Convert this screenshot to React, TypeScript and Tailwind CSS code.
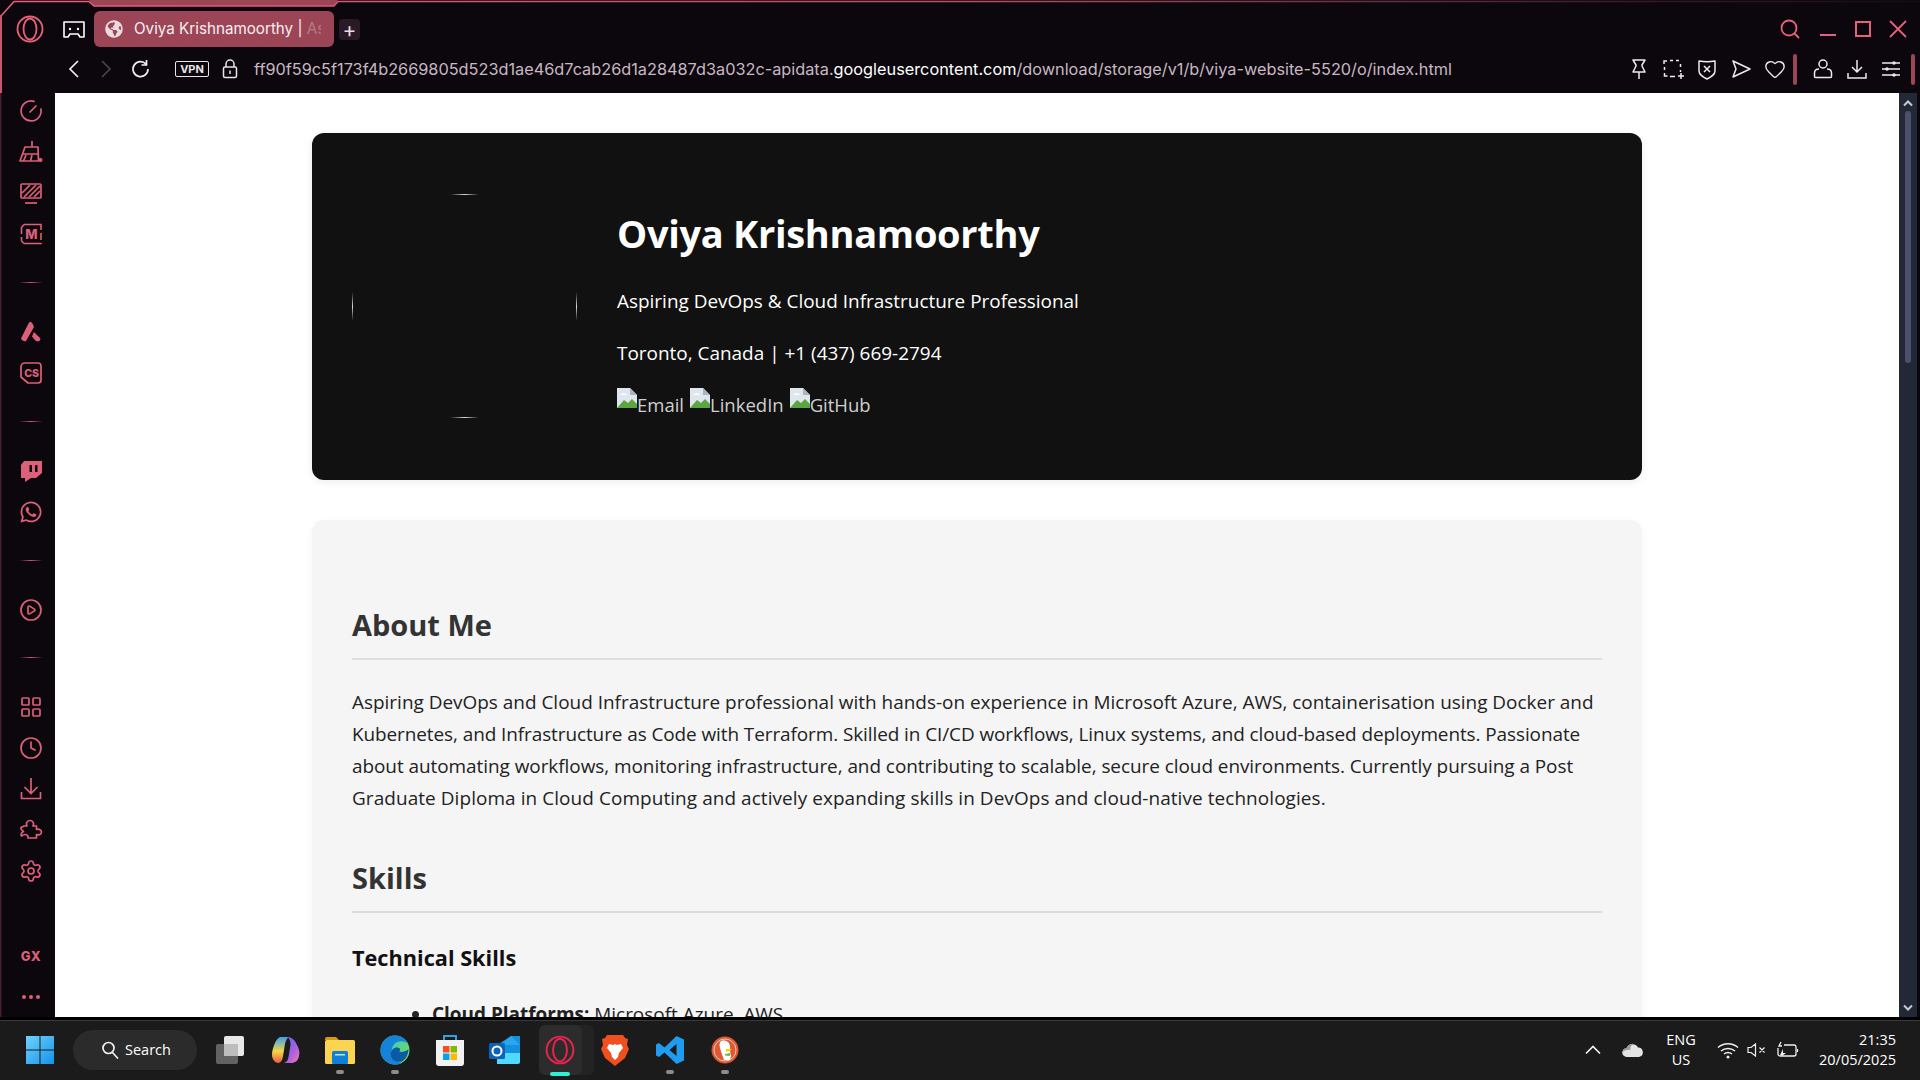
import { CirclePlay, Clock, Heart, LayoutGrid, Settings } from "lucide-react";
import { FaGlobeAmericas, FaWhatsapp } from "react-icons/fa";

const URL_HEAD = "ff90f59c5f173f4b2669805d523d1ae46d7cab26d1a28487d3a032c-apidata.";
const URL_HOST = "googleusercontent.com";
const URL_TAIL = "/download/storage/v1/b/viya-website-5520/o/index.html";

// sidebar icons, all share the same pink
function Gauge() {
    return (
        <svg width="24" height="24" viewBox="0 0 24 24" fill="none" stroke="currentColor" strokeWidth="1.7" strokeLinecap="round">
            <path d="M15 2.400A10 10 0 1 0 21.900 10" />
            <path d="M11 13l6-6" />
        </svg>
    );
}

function Cleaner() {
    return (
        <svg width="24" height="24" viewBox="0 0 24 24" fill="none" stroke="currentColor" strokeWidth="1.7" strokeLinejoin="round">
            <path d="M13 1v6M6 7h13l.5 14H1z" />
            <path d="M4 14h15.500M7 15l-2.500 6M13 15l-1.500 6" />
            <circle cx="21.500" cy="20" r="2" fill="currentColor" stroke="none" />
        </svg>
    );
}

function Hatch() {
    return (
        <svg width="24" height="24" viewBox="0 0 24 24" fill="none" stroke="currentColor" strokeWidth="1.7">
            <rect x="2" y="3" width="20" height="14" rx="1" />
            <path d="M3 12l8-8M5 16L17 4M10 16L21 5M15 16l6-6" />
            <path d="M6 22h12" />
        </svg>
    );
}

function Chip() {
    return (
        <svg width="24" height="24" viewBox="0 0 24 24" fill="none" stroke="currentColor" strokeWidth="1.6">
            <path d="M5 2.500h17V8M22 11v7M22 21v.5H5M2.500 19V15M2.500 12V5.500L5 2.500M2.500 19L5 21.500" />
            <text x="12.500" y="17" textAnchor="middle" fontFamily="Inter, sans-serif" fontWeight="800" fontSize="13" fill="currentColor" stroke="none">M</text>
        </svg>
    );
}

function Aria() {
    return (
        <svg width="24" height="24" viewBox="0 0 24 24" fill="currentColor">
            <path d="M10 2.500c1-1 3-.5 3.500 1L15 7l-8 14c-1.500.8-4 0-5-2.500z" />
            <path d="M15 12l6 6c1 1.500 0 3-1.500 3.300-1.500.2-3-.3-4-1.800l-2.500-3z" />
        </svg>
    );
}

function CsBadge() {
    return (
        <svg width="24" height="24" viewBox="0 0 24 24" fill="none" stroke="currentColor" strokeWidth="1.7" strokeLinejoin="round">
            <path d="M6 2h13a3 3 0 0 1 3 3v14a3 3 0 0 1-3 3H9l-7-6V6a4 4 0 0 1 4-4z" />
            <text x="12.500" y="15.500" textAnchor="middle" fontFamily="Inter, sans-serif" fontWeight="800" fontSize="10.500" fill="currentColor" stroke="none">CS</text>
        </svg>
    );
}

function Twitch() {
    return (
        <svg width="24" height="24" viewBox="0 0 24 24">
            <path fill="currentColor" d="M5 2h18v12l-6 5h-5l-6 4v-4H2V6z" />
            <path fill="#0b070c" d="M10.500 6h2.500v7h-2.500zM16 6h2.500v7H16z" />
        </svg>
    );
}

function TrayDown() {
    return (
        <svg width="24" height="24" viewBox="0 0 24 24" fill="none" stroke="currentColor" strokeWidth="1.7">
            <path d="M12 1v15M5.500 10l6.500 6.500 6.500-6.500M2.500 15v6.500h19V15" />
        </svg>
    );
}

function PuzzlePiece() {
    return (
        <svg width="24" height="24" viewBox="0 0 24 24" fill="none" stroke="currentColor" strokeWidth="1.7" strokeLinejoin="round">
            <path d="M5 8h3c-1.500-3 .5-5.500 3-5.500s4.500 2.500 3 5.500h3.500v3.500c2.500-1 5 .5 5 2.500s-2.500 3.500-5 2.500V20H9c.5-2-1-3.500-3-3.500-1.500 0-2.500.7-3.500 1.500-1-2 0-3.500 2-4.500-1.500-1-3-2.500-2.500-4z" />
        </svg>
    );
}

function SideDivider({ className }: { className?: string }) {
    return (
        <div className={`flex items-center justify-center ${className ?? "h-[57px]"}`}>
            <div className="w-6 h-px -mt-[2px] bg-gradient-to-r from-transparent via-[#c9566f] to-transparent" />
        </div>
    );
}

function SideIcon({ children }: { children: React.ReactNode }) {
    return <div className="h-[41px] flex items-center justify-center">{children}</div>;
}

function Sidebar() {
    return (
        <aside className="w-[55px] shrink-0 pl-[7px] flex flex-col text-[#dd5f79] bg-gradient-to-r from-[#5c2a38] from-0% to-[#0b070c] to-[4%]">
            <div className="-mt-[2.500px]">
                <SideIcon><Gauge /></SideIcon>
                <SideIcon><Cleaner /></SideIcon>
                <SideIcon><Hatch /></SideIcon>
                <SideIcon><Chip /></SideIcon>
            </div>
            <SideDivider />
            <SideIcon><Aria /></SideIcon>
            <SideIcon><CsBadge /></SideIcon>
            <SideDivider />
            <SideIcon><Twitch /></SideIcon>
            <SideIcon><FaWhatsapp size={24} /></SideIcon>
            <SideDivider />
            <SideIcon><CirclePlay size={24} strokeWidth={1.7} /></SideIcon>
            <SideDivider className="h-[56px]" />
            <SideIcon><LayoutGrid size={24} strokeWidth={1.7} /></SideIcon>
            <SideIcon><Clock size={24} strokeWidth={1.7} /></SideIcon>
            <SideIcon><TrayDown /></SideIcon>
            <SideIcon><PuzzlePiece /></SideIcon>
            <SideIcon><Settings size={24} strokeWidth={1.7} /></SideIcon>
            <div className="mt-auto h-[41px] flex items-center justify-center font-['Inter'] font-extrabold text-[13px] tracking-[0.5px]">GX</div>
            <div className="h-[38px] mb-[1.500px] flex items-center justify-center gap-[3px]">
                <span className="w-1 h-1 rounded-full bg-[#dd5f79]" />
                <span className="w-1 h-1 rounded-full bg-[#dd5f79]" />
                <span className="w-1 h-1 rounded-full bg-[#dd5f79]" />
            </div>
        </aside>
    );
}

function OperaLogo({ size, color }: { size: number; color: string }) {
    return (
        <svg width={size} height={size} viewBox="0 0 28 28" fill="none" stroke={color} strokeWidth="1.800">
            <circle cx="14" cy="14" r="12.500" />
            <ellipse cx="14" cy="14" rx="6.500" ry="10.500" />
        </svg>
    );
}

function TopBar() {
    return (
        <header className="relative h-[93px] shrink-0 bg-[#0b070c] text-white">
            {/* pink frame line that runs over the top edge */}
            <svg className="absolute left-0 top-0 w-full h-[20px]" viewBox="0 0 1920 20" preserveAspectRatio="none" fill="none">
                <defs>
                    <linearGradient id="frame" x1="0" x2="1" y1="0" y2="0">
                        <stop offset="0" stopColor="#e8607c" />
                        <stop offset="0.5" stopColor="#b85068" />
                        <stop offset="0.85" stopColor="#3a1a26" />
                        <stop offset="1" stopColor="#150c12" />
                    </linearGradient>
                </defs>
                <path d="M89 0h249l-4 6H94z" fill="#9c4557" />
                <path d="M1 16L14 1.500H89l5 4.500h240l4-4.500H1920" stroke="url(#frame)" strokeWidth="1.500" />
            </svg>
            <div className="absolute left-0 top-[15px] bottom-0 w-[2px] bg-[#c9566f]" />

            <div className="h-[52px] flex items-center pt-[6px]">
                <div className="w-[60px] flex justify-center"><OperaLogo size={28} color="#e8607c" /></div>
                <div className="w-[34px] -ml-[3px] flex justify-center">
                    <svg width="22" height="22" viewBox="0 0 22 22" fill="none" stroke="white" strokeWidth="1.600" strokeLinejoin="round">
                        <path d="M1 4h20v15h-4l-2-3H7l-2 3H1z" />
                        <circle cx="7" cy="11" r="1.200" fill="white" stroke="none" />
                        <circle cx="15" cy="11" r="1.200" fill="white" stroke="none" />
                    </svg>
                </div>
                <div className="w-[240px] h-[36px] ml-[3px] rounded-md bg-[#9c4557] flex items-center pl-[11px] overflow-hidden">
                    <FaGlobeAmericas size={18} className="text-[#e9dcdf] shrink-0" />
                    <span className="ml-[11px] font-['Inter'] text-[15.200px] whitespace-nowrap text-[#f6eef0] w-[187px] overflow-hidden">
                        Oviya Krishnamoorthy | <span className="opacity-30">As</span>
                    </span>
                </div>
                <div className="w-[21px] h-[21px] ml-[5px] rounded bg-[#2a1a26] flex items-center justify-center text-[#e4dfe3] text-[21px] leading-none font-['Inter']">+</div>

                <div className="ml-auto flex items-center text-[#e8607c] pr-[13px]">
                    <svg width="22" height="22" viewBox="0 0 22 22" fill="none" stroke="currentColor" strokeWidth="1.800" strokeLinecap="round">
                        <circle cx="10" cy="10" r="7.500" /><path d="M16 16l3.500 3.500" />
                    </svg>
                    <div className="w-4 h-[2px] bg-current ml-[19px] mt-[11px]" />
                    <div className="w-4 h-4 ml-[19px] border-2 border-current" />
                    <svg className="ml-[18px]" width="18" height="18" viewBox="0 0 18 18" stroke="currentColor" strokeWidth="1.800"><path d="M1 1l16 16M17 1L1 17" /></svg>
                </div>
            </div>

            <div className="h-[34px] flex items-center">
                <svg className="ml-[66px]" width="16" height="20" viewBox="0 0 16 20" fill="none" stroke="#f2eef1" strokeWidth="1.700"><path d="M12 2L4 10l8 8" /></svg>
                <svg className="ml-[16px]" width="16" height="20" viewBox="0 0 16 20" fill="none" stroke="#4a4549" strokeWidth="1.700"><path d="M4 2l8 8-8 8" /></svg>
                <svg className="ml-[16px]" width="20" height="20" viewBox="0 0 20 20" fill="none" stroke="#f2eef1" strokeWidth="1.700"><path d="M16 5a7.500 7.500 0 1 0 2 5M16.500 1v5h-5" /></svg>
                <span className="ml-[25px] h-[16px] w-[34px] rounded-[2px] border border-[#e8e4e7] flex items-center justify-center font-['Inter'] font-bold text-[11px] leading-none text-[#e8e4e7]">VPN</span>
                <svg className="ml-[13px]" width="16" height="20" viewBox="0 0 16 20" fill="none" stroke="#e8e4e7" strokeWidth="1.500">
                    <rect x="1.500" y="8" width="13" height="10.500" rx="1.500" />
                    <path d="M4 8V5a4 4 0 0 1 8 0v3M8 11.500v3.500" />
                </svg>
                <span className="ml-[16px] font-['Inter'] text-[16.300px] whitespace-nowrap text-[#c9b7c4]">
                    {URL_HEAD}<span className="text-white">{URL_HOST}</span>{URL_TAIL}
                </span>
                <div className="ml-auto flex items-center text-[#eeeaed]">
                    <svg width="22" height="22" viewBox="0 0 22 22" fill="none" stroke="currentColor" strokeWidth="1.500" strokeLinejoin="round">
                        <path d="M5 2h12l-3 5v1l3 6H5l3-6V7zM11 14v7" />
                    </svg>
                    <svg className="ml-[12px]" width="22" height="22" viewBox="0 0 22 22" fill="none" stroke="currentColor" strokeWidth="1.500">
                        <path d="M2 6V3h3M8 2.500h3M14 2.500h3M18.500 6v3M18.500 12v2M2.500 9v3M2.500 15v3h3M8 18.500h5M16 18h6M19 15v6" />
                    </svg>
                    <svg className="ml-[12px]" width="22" height="22" viewBox="0 0 22 22" fill="none" stroke="currentColor" strokeWidth="1.500" strokeLinejoin="round">
                        <path d="M3 3c5 1 11 1 16 0v10c0 4-4 6-8 8-4-2-8-4-8-8z" />
                        <path d="M8 8l6 6M14 8l-6 6" />
                    </svg>
                    <svg className="ml-[12px]" width="22" height="22" viewBox="0 0 22 22" fill="none" stroke="currentColor" strokeWidth="1.500" strokeLinejoin="round">
                        <path d="M3 3l17 8-17 8 3-8z" />
                    </svg>
                    <Heart className="ml-[12px]" size={22} strokeWidth={1.500} />
                    <div className="w-1 h-[31px] rounded-full bg-[#9c4557] ml-[7px]" />
                    <svg className="ml-[15px]" width="22" height="22" viewBox="0 0 22 22" fill="none" stroke="currentColor" strokeWidth="1.500">
                        <circle cx="11" cy="6" r="4" />
                        <path d="M7 11c-3 0-4.500 2-4.500 4v3.500c0 .6.500 1 1 1h15c.5 0 1-.4 1-1V15c0-2-1.500-4-4.500-4" />
                    </svg>
                    <svg className="ml-[12px]" width="22" height="22" viewBox="0 0 22 22" fill="none" stroke="currentColor" strokeWidth="1.500">
                        <path d="M11 2v12M6 9l5 5 5-5M2 15v5h18v-5" />
                    </svg>
                    <svg className="ml-[12px]" width="22" height="22" viewBox="0 0 22 22" fill="none" stroke="currentColor" strokeWidth="1.500">
                        <path d="M2 5h18M2 11h18M2 17h18" />
                        <circle cx="14" cy="5" r="1" fill="currentColor" />
                        <circle cx="7" cy="11" r="1" fill="currentColor" />
                        <circle cx="14" cy="17" r="1" fill="currentColor" />
                    </svg>
                    <div className="w-1 h-[31px] rounded-full bg-[#9c4557] ml-[9px] mr-[5px]" />
                </div>
            </div>
            <div className="h-[7px]" />
        </header>
    );
}

function BrokenImage({ alt }: { alt: string }) {
    return (
        <span className="inline-flex items-start">
            <svg width="20" height="20" viewBox="0 0 20 20" className="shrink-0">
                <path d="M0 0h13l7 7v13H0z" fill="#dfe6ee" />
                <path d="M13 0v7h7z" fill="#a9b4bf" />
                <path d="M3 7c2-2.500 5-2.500 7 0H3z" fill="#fff" />
                <path d="M0 20l7-8 4 3 4-4 5 5v4z" fill="#5ca53f" />
            </svg>
            <span className="text-[#cfcfcf] mt-[1px] leading-[32px] text-[18.500px]">{alt}</span>
        </span>
    );
}

function Profile() {
    return (
        <section className="h-[347px] rounded-xl bg-[#111111] px-10 flex gap-10 text-white shadow-[0_2px_8px_rgba(0,0,0,0.08)]">
            <div className="relative w-[225px] h-[224px] mt-[61px] shrink-0">
                <div className="absolute top-0 left-[98px] w-[29px] h-px bg-gradient-to-r from-transparent via-[#d8d8d8] to-transparent" />
                <div className="absolute bottom-0 left-[98px] w-[29px] h-px bg-gradient-to-r from-transparent via-[#d8d8d8] to-transparent" />
                <div className="absolute left-0 top-[98px] w-px h-[29px] bg-gradient-to-b from-transparent via-[#d8d8d8] to-transparent" />
                <div className="absolute right-0 top-[98px] w-px h-[29px] bg-gradient-to-b from-transparent via-[#d8d8d8] to-transparent" />
            </div>
            <div className="mt-[76px]">
                <h1 className="text-[38px] leading-[48px] font-bold tracking-[-0.3px]">Oviya Krishnamoorthy</h1>
                <p className="mt-[28px]">Aspiring DevOps &amp; Cloud Infrastructure Professional</p>
                <p className="mt-5">Toronto, Canada | +1 (437) 669-2794</p>
                <div className="mt-[19px] flex gap-[6px]">
                    <BrokenImage alt="Email" />
                    <BrokenImage alt="LinkedIn" />
                    <BrokenImage alt="GitHub" />
                </div>
            </div>
        </section>
    );
}

function SectionTitle({ children, className }: { children: React.ReactNode; className?: string }) {
    return (
        <h2 className={`text-[29px] leading-[40px] font-bold text-[#333333] pb-[13px] border-b-2 border-[#dddddd] ${className ?? ""}`}>
            {children}
        </h2>
    );
}

function Resume() {
    return (
        <section className="mt-10 h-[700px] rounded-xl bg-[#f5f5f5] px-10 pt-[85px] text-[#222222] shadow-[0_2px_8px_rgba(0,0,0,0.04)]">
            <SectionTitle>About Me</SectionTitle>
            <p className="mt-[26px] whitespace-nowrap">
                <span className="block">Aspiring DevOps and Cloud Infrastructure professional with hands-on experience in Microsoft Azure, AWS, containerisation using Docker and</span>
                <span className="block tracking-[-0.08px]">Kubernetes, and Infrastructure as Code with Terraform. Skilled in CI/CD workflows, Linux systems, and cloud-based deployments. Passionate</span>
                <span className="block tracking-[-0.045px]">about automating workflows, monitoring infrastructure, and contributing to scalable, secure cloud environments. Currently pursuing a Post</span>
                <span className="block tracking-[0.08px]">Graduate Diploma in Cloud Computing and actively expanding skills in DevOps and cloud-native technologies.</span>
            </p>
            <SectionTitle className="mt-[44px]">Skills</SectionTitle>
            <h3 className="mt-[30px] text-[21.700px] leading-[30px] font-bold text-[#111111]">Technical Skills</h3>
            <ul className="mt-[25px] pl-[80px] list-disc">
                <li><strong>Cloud Platforms:</strong> Microsoft Azure, AWS</li>
            </ul>
        </section>
    );
}

function Scrollbar() {
    return (
        <div className="w-[18px] shrink-0 bg-[#232836] flex flex-col items-center">
            <svg className="mt-[6px]" width="10" height="8" viewBox="0 0 10 8" fill="none" stroke="#c9c9d0" strokeWidth="2"><path d="M1 6.500l4-4 4 4" /></svg>
            <div className="w-[6px] h-[252px] mt-[4px] rounded-full bg-[#4d506d]" />
            <svg className="mt-auto mb-[5px]" width="10" height="8" viewBox="0 0 10 8" fill="none" stroke="#c9c9d0" strokeWidth="2"><path d="M1 1.500l4 4 4-4" /></svg>
        </div>
    );
}

function TaskSlot({ children, dot }: { children: React.ReactNode; dot?: boolean }) {
    return (
        <div className="relative w-[55px] h-[58px] flex items-center justify-center">
            {children}
            {dot && <span className="absolute bottom-[5px] left-[23px] w-2 h-1 rounded-full bg-[#8c8c8c]" />}
        </div>
    );
}

function Taskbar() {
    return (
        <footer className="h-[60px] shrink-0 pb-[1px] bg-[#1b1b1b] border-t border-[#3a3a3a] flex items-center font-['Open_Sans'] text-white">
            <div className="w-[56px] ml-3 flex justify-center">
                <svg width="30" height="30" viewBox="0 0 30 30">
                    <defs>
                        <linearGradient id="win" x1="0" y1="0" x2="1" y2="1">
                            <stop offset="0" stopColor="#6fd3fb" />
                            <stop offset="1" stopColor="#1493ea" />
                        </linearGradient>
                    </defs>
                    <path fill="url(#win)" d="M1 1h13.500v13.500H1zM15.500 1H29v13.500H15.500zM1 15.500h13.500V29H1zM15.500 15.500H29V29H15.500z" />
                </svg>
            </div>
            <div className="w-[124px] h-10 ml-[5px] rounded-full bg-[#2b2b2b] flex items-center pl-[28px] gap-[6px] text-[14.500px]">
                <svg width="18" height="18" viewBox="0 0 18 18" fill="none" stroke="#f0f0f0" strokeWidth="1.700" strokeLinecap="round"><circle cx="7.500" cy="7" r="5.500" /><path d="M11.500 11.500l5 5.500" /></svg>
                Search
            </div>
            <div className="ml-[5.500px] flex">
                <TaskSlot>
                    <svg width="30" height="30" viewBox="0 0 30 30">
                        <rect x="9" y="1" width="20" height="20" rx="2" fill="#e8e8e8" />
                        <rect x="1" y="9" width="22" height="20" rx="2" fill="#6e6e6e" fillOpacity="0.85" />
                        <rect x="9" y="9" width="14" height="12" fill="#bdbdbd" />
                    </svg>
                </TaskSlot>
                <TaskSlot>
                    <svg width="30" height="30" viewBox="0 0 30 30">
                        <defs>
                            <linearGradient id="cpA" x1="0" y1="0" x2="0" y2="1">
                                <stop offset="0" stopColor="#3aa0f0" />
                                <stop offset="0.55" stopColor="#f5d742" />
                                <stop offset="1" stopColor="#f0584a" />
                            </linearGradient>
                            <linearGradient id="cpB" x1="0" y1="0" x2="1" y2="1">
                                <stop offset="0" stopColor="#3f6ef0" />
                                <stop offset="0.6" stopColor="#b15fe0" />
                                <stop offset="1" stopColor="#f27ba5" />
                            </linearGradient>
                        </defs>
                        <path fill="url(#cpA)" d="M10 2h9c-2 1-3 3-4 7l-2 12c-.5 4-2 7-5 7-3 0-6-4-6-8 0-5 3-16 8-18z" />
                        <path fill="url(#cpB)" d="M17 2c5 0 8 3 10 8 2 4 3 7 2 11-1 5-4 7-8 7h-7c3-1 4-3 4.500-6l2-12c.3-3-1-7-3.500-8z" />
                    </svg>
                </TaskSlot>
                <TaskSlot dot>
                    <svg width="30" height="30" viewBox="0 0 30 30">
                        <path fill="#d69c10" d="M0 4a2 2 0 0 1 2-2h9l3 3h-14z" />
                        <rect x="0" y="5" width="30" height="24" rx="1.500" fill="#fbd451" />
                        <rect x="7" y="16" width="16" height="13" rx="1.500" fill="#0f80d7" />
                        <rect x="10" y="19" width="10" height="1.500" fill="#bfe1fb" />
                    </svg>
                </TaskSlot>
                <TaskSlot dot>
                    <svg width="30" height="30" viewBox="0 0 30 30">
                        <defs>
                            <linearGradient id="edgeA" x1="0" y1="0" x2="1" y2="1">
                                <stop offset="0" stopColor="#2fc6c6" />
                                <stop offset="1" stopColor="#7bdc5a" />
                            </linearGradient>
                        </defs>
                        <circle cx="15" cy="15" r="14.500" fill="url(#edgeA)" />
                        <path fill="#1583d8" d="M.5 15C1 6 8 .500 15 .500c6 0 11 3 13 8-4-3-11-3-14 1-3 3-3 9 0 13 2 3 5 5 8 5.500-2 1-4 1.500-7 1.500C7 29.500 0 23 .5 15z" />
                        <path fill="#0c5aa6" d="M13 14c2-2 6-2 7 0 .5 1 0 2-1 2.500 3 1 6 0 9.500-2-.2 5-3 10-6.500 12-4 1-9 0-11-5-1-3 0-6 2-7.500z" />
                    </svg>
                </TaskSlot>
                <TaskSlot>
                    <svg width="32" height="34" viewBox="0 0 32 34">
                        <path d="M10 8V3h12v5" fill="none" stroke="#2aa3e0" strokeWidth="2" />
                        <path d="M2 7h28v23a3 3 0 0 1-3 3H5a3 3 0 0 1-3-3z" fill="#f2f2f2" />
                        <rect x="9" y="13" width="6.500" height="6.500" fill="#f25022" />
                        <rect x="16.500" y="13" width="6.500" height="6.500" fill="#7fba00" />
                        <rect x="9" y="20.500" width="6.500" height="6.500" fill="#00a4ef" />
                        <rect x="16.500" y="20.500" width="6.500" height="6.500" fill="#ffb900" />
                    </svg>
                </TaskSlot>
                <TaskSlot>
                    <svg width="32" height="30" viewBox="0 0 32 30">
                        <path d="M11 8l11-7h9v18H11z" fill="#1490df" />
                        <path d="M22 1l9 9H11z" fill="#28a8ea" />
                        <path d="M8 18h23v9a2 2 0 0 1-2 2H8z" fill="#50d9ff" />
                        <rect x="0" y="8" width="16" height="16" rx="1.500" fill="#0a62ba" />
                        <circle cx="8" cy="16" r="4.500" fill="none" stroke="white" strokeWidth="2" />
                    </svg>
                </TaskSlot>
                <div className="relative w-[55px] h-[58px] flex items-center justify-center">
                    <div className="absolute left-[11px] top-[4px] w-[50px] h-[50px] rounded-md bg-[#232323]" />
                    <div className="absolute left-[6px] top-[4px] w-[43px] h-[50px] rounded-md bg-[#2c2c2c]" />
                    <div className="relative"><OperaLogo size={30} color="#e8244f" /></div>
                    <span className="absolute bottom-[3px] left-[17px] w-5 h-1 rounded-full bg-[#2ff0d0]" />
                </div>
                <TaskSlot>
                    <svg width="28" height="32" viewBox="0 0 28 32">
                        <path d="M6 1h16l2 3 3 1-1 6 2 4-4 9-10 8-10-8-4-9 2-4-1-6 3-1z" fill="#f0501f" />
                        <path d="M8 10l4 1 2-1 2 1 4-1 2 4-4 5-1 4-3 3-3-3-1-4-4-5z" fill="#fff" />
                    </svg>
                </TaskSlot>
                <TaskSlot dot>
                    <svg width="30" height="30" viewBox="0 0 30 30">
                        <path fill="#1f9cf0" d="M21.500 1L29 4.500v21L21.500 29l-12-11.500L4 22l-3-1.500v-11L4 8l5.500 4.500zM21.500 9l-7 6 7 6z" />
                    </svg>
                </TaskSlot>
                <TaskSlot dot>
                    <svg width="28" height="28" viewBox="0 0 28 28">
                        <circle cx="14" cy="14" r="13.500" fill="#de5833" />
                        <circle cx="14" cy="14" r="11" fill="none" stroke="#f3c9bb" strokeWidth="1" />
                        <path d="M10 5c4-1.500 9 .500 9 6 0 3 0 6 1 9l-1 4h-6c-1-3-3-8-4-12-.5-2-1-5 1-7z" fill="#fff" />
                        <path d="M15 13h6l-3 2.500h-3z" fill="#fdd20a" />
                        <path d="M14 18l5-1v3l-5-.500z" fill="#65bc46" />
                    </svg>
                </TaskSlot>
            </div>

            <div className="ml-auto flex items-center">
                <div className="w-10 flex justify-center">
                    <svg width="16" height="10" viewBox="0 0 16 10" fill="none" stroke="#f0f0f0" strokeWidth="1.700"><path d="M1 8.500l7-7 7 7" /></svg>
                </div>
                <div className="w-10 flex justify-center">
                    <svg width="22" height="14" viewBox="0 0 22 14">
                        <path d="M5 14a4.500 4.500 0 0 1-.5-9A6.500 6.500 0 0 1 16 4.500 4.800 4.800 0 0 1 17 14z" fill="#e4e4e4" />
                        <path d="M1 9a4 4 0 0 1 3.500-4A6.500 6.500 0 0 1 12 1c-3 1-4 3-3.500 6-3-.5-6 .5-7.500 2z" fill="#9a9a9a" />
                    </svg>
                </div>
                <div className="w-[56px] text-center text-[14.500px] leading-5">ENG<br />US</div>
                <div className="w-[38px] flex justify-center">
                    <svg width="22" height="18" viewBox="0 0 22 18" fill="none" stroke="#f0f0f0" strokeWidth="1.500">
                        <path d="M1 6.500c5.500-5 14.500-5 20 0M4 10c4-3.500 10-3.500 14 0M7 13c2.500-2 5.500-2 8 0" />
                        <circle cx="11" cy="16" r="1.500" fill="#f0f0f0" stroke="none" />
                    </svg>
                </div>
                <div className="w-5 flex justify-center">
                    <svg width="20" height="14" viewBox="0 0 20 14" fill="none" stroke="#f0f0f0" strokeWidth="1.200">
                        <path d="M1 4.500h3L8.500 1v12L4 9.500H1zM12.500 4.500l5 5M17.500 4.500l-5 5" />
                    </svg>
                </div>
                <div className="w-[42px] flex justify-center">
                    <svg width="22" height="18" viewBox="0 0 22 18" fill="none" stroke="#f0f0f0" strokeWidth="1.300">
                        <path d="M7 4h10a2 2 0 0 1 2 2v7a2 2 0 0 1-2 2H3a2 2 0 0 1-2-2V7" />
                        <path d="M20.500 8v3" />
                        <path d="M3 14l3-6v4h3l-4 3z" fill="#f0f0f0" stroke="none" />
                        <path d="M4 1L2 5h3" />
                    </svg>
                </div>
                <div className="w-[87px] text-right text-[14.500px] leading-5 mr-[24px] whitespace-nowrap">
                    21:35<br />20/05/2025
                </div>
            </div>
        </footer>
    );
}

export default function App() {
    return (
        <div className="w-[1920px] h-[1080px] flex flex-col overflow-hidden bg-[#0b070c] font-['Open_Sans',sans-serif]">
            <TopBar />
            <div className="flex h-[924px] shrink-0">
                <Sidebar />
                <main className="flex-1 min-w-0 bg-white overflow-hidden pt-10 px-[257px] text-[18.950px] leading-8">
                    <Profile />
                    <Resume />
                </main>
                <Scrollbar />
                <div className="w-[3px] shrink-0" />
            </div>
            <div className="h-[3px] shrink-0 bg-black" />
            <Taskbar />
        </div>
    );
}
